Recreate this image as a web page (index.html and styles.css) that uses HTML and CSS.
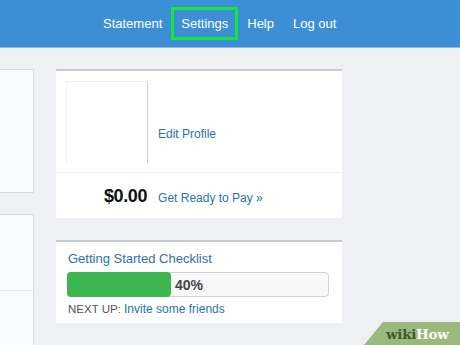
FILE: index.html
```html
<!DOCTYPE html>
<html>
	<head>
		<meta charset="utf-8">
		<title>Summary</title>
		<link rel="stylesheet" href="styles.css">
	</head>
	<body>
		<header class="topbar">
			<nav class="nav">
				<a href="#">Statement</a>
				<a href="#" class="nav-hl">Settings</a>
				<a href="#">Help</a>
				<a href="#">Log out</a>
			</nav>
		</header>
		<main class="page">
			<div class="side">
				<div class="side-card side-one"></div>
				<div class="side-card side-two"><div class="side-row"></div></div>
			</div>
			<div class="main-col">
				<section class="card">
					<div class="profile">
						<div class="avatar"></div>
						<a href="#" class="link edit">Edit Profile</a>
					</div>
					<div class="pay">
						<span class="amount">$0.00</span>
						<a href="#" class="link">Get Ready to Pay &raquo;</a>
					</div>
				</section>
				<section class="card checklist">
					<a href="#" class="title">Getting Started Checklist</a>
					<div class="bar">
						<div class="fill" style="width: 40%"></div>
						<span class="pct">40%</span>
					</div>
					<p class="next">NEXT UP: <a href="#" class="link">Invite some friends</a></p>
				</section>
			</div>
		</main>
		<div class="wikihow"><span class="wiki">wiki</span><span class="how">How</span></div>
	</body>
</html>
```
FILE: styles.css
```css
*{margin: 0; padding: 0; box-sizing: border-box;}
html,body{height: 100%;}
body{background: #eef0f3; font-family: "Liberation Sans", Arial, sans-serif; overflow: hidden; position: relative;}
a{text-decoration: none;}

.topbar{height: 48px; background: #3d8fd5; border-bottom: 1px solid #8dbde6;}
.nav{display: flex; align-items: center; height: 47px; padding-left: 103px; gap: 19px;}
.nav a{color: #fff; font-size: 13px;}
.nav .nav-hl{border: 3px solid #12e83a; padding: 6px 7px; margin: 0 -10px 0 -10px;}

.page{display: flex; padding-top: 21px;}
.side{width: 34px; margin-right: 22px; display: flex; flex-direction: column; gap: 21px;}
.side-card{background: #fafbfc; border: 1px solid #d6d9de; border-left: none;}
.side-one{height: 124px;}
.side-two{height: 140px;}
.side-row{height: 76px; border-bottom: 1px solid #e6e8eb;}

.main-col{width: 286px; display: flex; flex-direction: column; gap: 22px;}
.card{background: #fff; border-top: 2px solid #c9cacc;}
.link{color: #2a72ad; font-size: 12px;}

.profile{display: flex; padding: 10px 10px 9px; border-bottom: 1px solid #f0f1f2;}
.avatar{width: 82px; height: 82px; border-top: 1px solid #ececec; border-right: 1px solid #cfcfcf; border-left: 1px solid #f3f3f3;}
.edit{margin-left: 10px; margin-top: 46px;}

.pay{display: flex; align-items: baseline; gap: 11px; padding: 13px 0 0 48px; height: 45px;}
.amount{font-size: 18px; font-weight: bold; color: #111; letter-spacing: -0.4px;}

.checklist{padding: 9px 13px 7px 11px;}
.title{display: block; color: #2a72ad; font-size: 13px; line-height: 16px; padding-left: 1px;}
.bar{display: flex; align-items: center; height: 25px; margin-top: 5px; border: 1px solid #d3d3d3; border-radius: 4px; background: #f8f8f8;}
.fill{height: 25px; margin: -1px 0 -1px -1px; background: #3db652; border-radius: 4px;}
.pct{font-size: 14px; font-weight: bold; color: #444; margin-left: 4px;}
.next{margin-top: 5px; font-size: 11.5px; line-height: 14px; color: #555; padding-left: 1px;}

.wikihow{position: absolute; right: 0; bottom: 0; width: 96px; height: 23px; background: #9bb97c;
clip-path: polygon(19px 0, 100% 0, 100% 100%, 0 100%); padding: 4px 0 0 22px;
font-family: "DejaVu Serif", "Liberation Serif", serif; font-weight: bold; font-size: 13.5px; letter-spacing: -0.3px;}
.wiki{color: #3e5a2e;}
.how{color: #fff;}
```
